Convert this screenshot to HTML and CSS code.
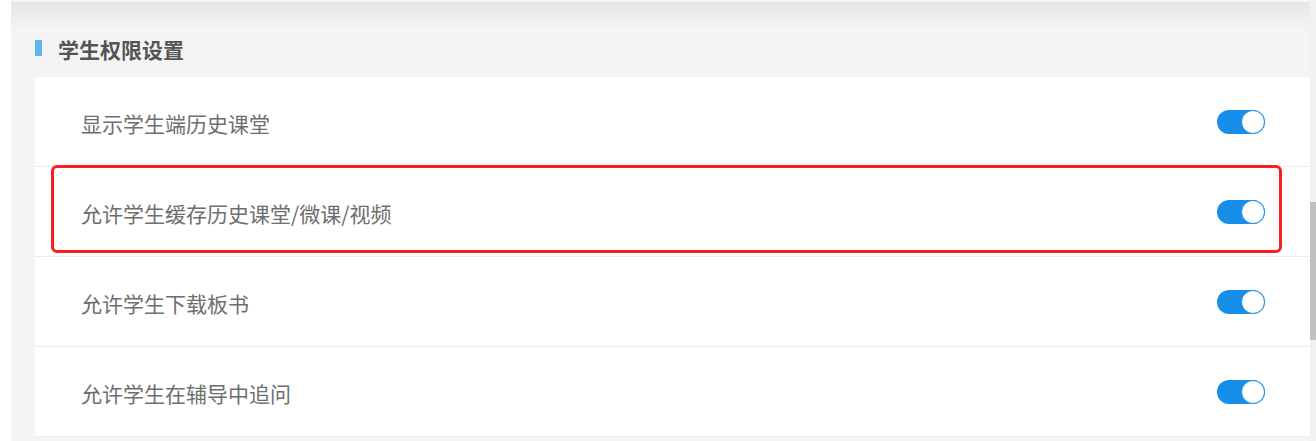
FILE: index.html
```html
<!DOCTYPE html>
<html lang="zh-CN">
<head>
<meta charset="utf-8">
<title>学生权限设置</title>
<link rel="stylesheet" href="styles.css">
</head>
<body>
<div class="page">
  <div class="gutter"></div>
  <div class="main">
    <div class="topshade"></div>
    <div class="section-head">
      <span class="mark"></span>
      <h2 class="title">学生权限设置</h2>
    </div>
    <div class="list">
      <div class="row">
        <span class="label">显示学生端历史课堂</span>
        <span class="switch"><span class="knob"></span></span>
      </div>
      <div class="row highlighted">
        <span class="label">允许学生缓存历史课堂/微课/视频</span>
        <span class="switch"><span class="knob"></span></span>
        <span class="annot"></span>
      </div>
      <div class="row">
        <span class="label">允许学生下载板书</span>
        <span class="switch"><span class="knob"></span></span>
      </div>
      <div class="row">
        <span class="label">允许学生在辅导中追问</span>
        <span class="switch"><span class="knob"></span></span>
      </div>
    </div>
  </div>
  <div class="scrollbar"><div class="thumb"></div></div>
</div>
</body>
</html>
```

FILE: styles.css
```css
html, body {
  margin: 0;
  padding: 0;
  background: #ffffff;
  font-family: "Noto Sans CJK SC", "Noto Sans", sans-serif;
}

.page {
  display: flex;
  height: 441px;
  overflow: hidden;
}

.gutter {
  width: 11px;
  flex: none;
  background: #ffffff;
}

.main {
  flex: 1;
  background: #f4f4f5;
  padding-left: 24px;
  display: flex;
  flex-direction: column;
  position: relative;
  border-top: 1px solid #f7f7f8;
}

.topshade {
  position: absolute;
  left: 0;
  right: 0;
  top: 1px;
  height: 26px;
  background: linear-gradient(#e6e6e9, #f3f3f4);
}

.section-head {
  position: relative;
  height: 76px;
  box-sizing: border-box;
  padding-top: 19px;
  display: flex;
  align-items: center;
  gap: 16px;
}

.mark {
  flex: none;
  width: 7px;
  height: 16px;
  background: #5db4ef;
  margin-top: -1px;
}

.title {
  margin: 0;
  font-size: 21px;
  font-weight: 700;
  color: #555555;
  letter-spacing: 0;
}

.list {
  background: #ffffff;
  display: flex;
  flex-direction: column;
}

.row {
  position: relative;
  height: 89px;
  border-bottom: 1px solid #ececf0;
  display: flex;
  align-items: center;
  justify-content: space-between;
  padding: 0 45px 0 46px;
}

.label {
  font-size: 21px;
  color: #6e6e6e;
  margin-top: 3px;
}

.switch {
  flex: none;
  width: 48px;
  height: 24px;
  border-radius: 12px;
  background: #178ee9;
  display: flex;
  justify-content: flex-end;
  align-items: center;
}

.knob {
  flex: none;
  width: 24px;
  height: 24px;
  box-sizing: border-box;
  border-radius: 50%;
  background: #ffffff;
  border: 1.5px solid #178ee9;
}

.annot {
  position: absolute;
  left: 16px;
  right: 28px;
  top: -2px;
  height: 88px;
  box-sizing: border-box;
  border: 3.5px solid #fa1e1e;
  border-radius: 6px;
}

.scrollbar {
  width: 6px;
  flex: none;
  background: #f1f1f1;
  padding-top: 202px;
}

.thumb {
  height: 138px;
  background: #c1c1c1;
}
```
